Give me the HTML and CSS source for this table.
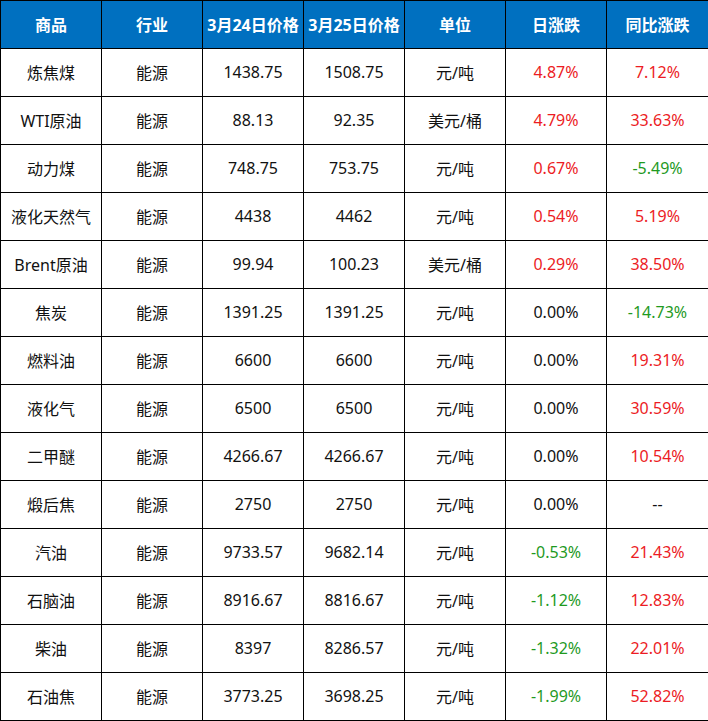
FILE: index.html
```html
<!DOCTYPE html>
<html lang="zh-CN">
<head>
<meta charset="utf-8">
<title>能源商品价格</title>
<link rel="stylesheet" href="styles.css">
</head>
<body>
<div class="sheet">
  <div class="cell head">商品</div><div class="cell head">行业</div><div class="cell head">3月24日价格</div><div class="cell head">3月25日价格</div><div class="cell head">单位</div><div class="cell head">日涨跌</div><div class="cell head">同比涨跌</div>

  <div class="cell">炼焦煤</div><div class="cell">能源</div><div class="cell">1438.75</div><div class="cell">1508.75</div><div class="cell">元/吨</div><div class="cell up">4.87%</div><div class="cell up">7.12%</div>
  <div class="cell">WTI原油</div><div class="cell">能源</div><div class="cell">88.13</div><div class="cell">92.35</div><div class="cell">美元/桶</div><div class="cell up">4.79%</div><div class="cell up">33.63%</div>
  <div class="cell">动力煤</div><div class="cell">能源</div><div class="cell">748.75</div><div class="cell">753.75</div><div class="cell">元/吨</div><div class="cell up">0.67%</div><div class="cell down">-5.49%</div>
  <div class="cell">液化天然气</div><div class="cell">能源</div><div class="cell">4438</div><div class="cell">4462</div><div class="cell">元/吨</div><div class="cell up">0.54%</div><div class="cell up">5.19%</div>
  <div class="cell">Brent原油</div><div class="cell">能源</div><div class="cell">99.94</div><div class="cell">100.23</div><div class="cell">美元/桶</div><div class="cell up">0.29%</div><div class="cell up">38.50%</div>
  <div class="cell">焦炭</div><div class="cell">能源</div><div class="cell">1391.25</div><div class="cell">1391.25</div><div class="cell">元/吨</div><div class="cell">0.00%</div><div class="cell down">-14.73%</div>
  <div class="cell">燃料油</div><div class="cell">能源</div><div class="cell">6600</div><div class="cell">6600</div><div class="cell">元/吨</div><div class="cell">0.00%</div><div class="cell up">19.31%</div>
  <div class="cell">液化气</div><div class="cell">能源</div><div class="cell">6500</div><div class="cell">6500</div><div class="cell">元/吨</div><div class="cell">0.00%</div><div class="cell up">30.59%</div>
  <div class="cell">二甲醚</div><div class="cell">能源</div><div class="cell">4266.67</div><div class="cell">4266.67</div><div class="cell">元/吨</div><div class="cell">0.00%</div><div class="cell up">10.54%</div>
  <div class="cell">煅后焦</div><div class="cell">能源</div><div class="cell">2750</div><div class="cell">2750</div><div class="cell">元/吨</div><div class="cell">0.00%</div><div class="cell">--</div>
  <div class="cell">汽油</div><div class="cell">能源</div><div class="cell">9733.57</div><div class="cell">9682.14</div><div class="cell">元/吨</div><div class="cell down">-0.53%</div><div class="cell up">21.43%</div>
  <div class="cell">石脑油</div><div class="cell">能源</div><div class="cell">8916.67</div><div class="cell">8816.67</div><div class="cell">元/吨</div><div class="cell down">-1.12%</div><div class="cell up">12.83%</div>
  <div class="cell">柴油</div><div class="cell">能源</div><div class="cell">8397</div><div class="cell">8286.57</div><div class="cell">元/吨</div><div class="cell down">-1.32%</div><div class="cell up">22.01%</div>
  <div class="cell">石油焦</div><div class="cell">能源</div><div class="cell">3773.25</div><div class="cell">3698.25</div><div class="cell">元/吨</div><div class="cell down">-1.99%</div><div class="cell up">52.82%</div>
</div>
</body>
</html>
```

FILE: styles.css
```css
html, body {
  margin: 0;
  padding: 0;
  background: #ffffff;
}

.sheet {
  width: 708px;
  box-sizing: border-box;
  padding: 1px 0 1px 1px;
  background: #000000;
  display: grid;
  grid-template-columns: repeat(6, 100px) 1fr;
  grid-auto-rows: 47px;
  gap: 1px;
  font-family: "Noto Sans", "Noto Sans CJK SC", sans-serif;
  font-size: 16px;
  color: #111111;
}

.cell {
  background: #ffffff;
  display: flex;
  align-items: center;
  justify-content: center;
  white-space: nowrap;
  letter-spacing: 0;
  padding-bottom: 2px;
  box-sizing: border-box;
}

.head {
  background: #0070c0;
  color: #ffffff;
  font-weight: 700;
}

.up {
  color: #ec1c24;
}

.down {
  color: #1f9a1f;
}
```
